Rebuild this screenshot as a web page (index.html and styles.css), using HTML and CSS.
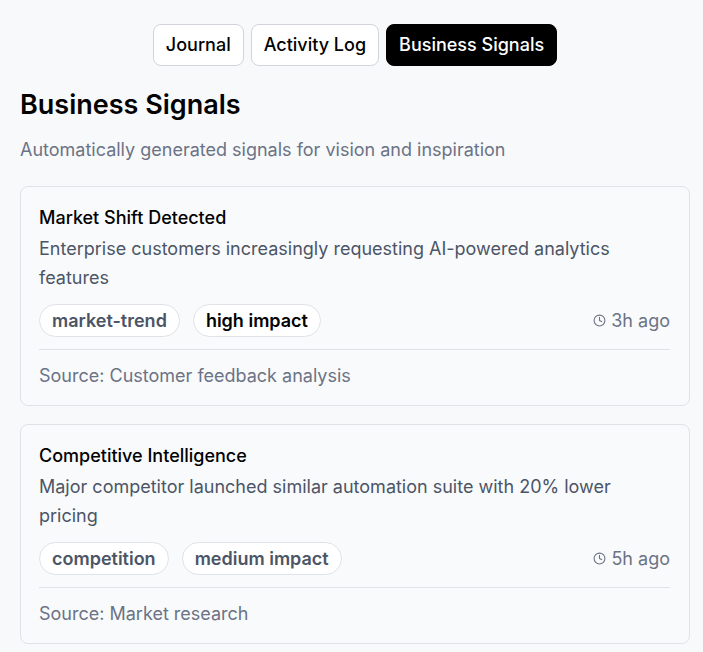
FILE: index.html
```
<!DOCTYPE html>
<html lang="en">
<head>
    <meta charset="UTF-8">
    <meta name="viewport" content="width=device-width, initial-scale=1.0">
    <title>Business Signals</title>
    <link rel="stylesheet" href="styles.css">
</head>
<body>

<nav class="tabs">
    <button class="tab">Journal</button>
    <button class="tab">Activity Log</button>
    <button class="tab active">Business Signals</button>
</nav>

<main>
    <h1>Business Signals</h1>
    <p class="subtitle">Automatically generated signals for vision and inspiration</p>

    <div class="signals">
        <article class="card">
            <h2>Market Shift Detected</h2>
            <p class="description">Enterprise customers increasingly requesting AI-powered analytics features</p>
            <div class="meta">
                <span class="badge">market-trend</span>
                <span class="badge high">high impact</span>
                <span class="time">
                    <svg class="clock" viewBox="0 0 24 24"><circle cx="12" cy="12" r="10"/><path d="M12 6v6l4 2"/></svg>
                    3h ago
                </span>
            </div>
            <p class="source">Source: Customer feedback analysis</p>
        </article>

        <article class="card">
            <h2>Competitive Intelligence</h2>
            <p class="description">Major competitor launched similar automation suite with 20% lower pricing</p>
            <div class="meta">
                <span class="badge">competition</span>
                <span class="badge">medium impact</span>
                <span class="time">
                    <svg class="clock" viewBox="0 0 24 24"><circle cx="12" cy="12" r="10"/><path d="M12 6v6l4 2"/></svg>
                    5h ago
                </span>
            </div>
            <p class="source">Source: Market research</p>
        </article>
    </div>
</main>

</body>
</html>
```
FILE: styles.css
```
* {
    box-sizing: border-box;
}
body {
    margin: 0;
    padding: 24px 13px 8px 20px;
    font-family: Inter, sans-serif;
    font-size: 18px;
    background: #f8f9fb;
    color: #020202;
}
h1, h2, p {
    margin: 0;
}
.tabs {
    display: flex;
    justify-content: center;
    gap: 7px;
}
.tab {
    height: 42px;
    padding: 0 12px 1px;
    border: 1px solid #d1d5db;
    border-radius: 8px;
    background: #fff;
    color: #020202;
    font-family: inherit;
    font-size: 18px;
    font-weight: 500;
    cursor: pointer;
}
.tab.active {
    background: #000;
    border-color: #000;
    color: #fff;
}
h1 {
    margin-top: 20px;
    font-size: 27px;
    font-weight: 600;
    line-height: 38px;
}
.subtitle {
    margin-top: 12px;
    color: #6b7385;
    line-height: 28px;
}
.signals {
    display: flex;
    flex-direction: column;
    gap: 18px;
    margin-top: 22px;
}
.card {
    padding: 18px 19px 16px 18px;
    border: 1px solid #dfe2e6;
    border-radius: 8px;
    background: #f9fafc;
}
h2 {
    font-size: 18px;
    font-weight: 500;
    line-height: 26px;
}
.description {
    margin-top: 3px;
    color: #4b5566;
    line-height: 29px;
}
.meta {
    display: flex;
    align-items: center;
    gap: 13px;
    margin-top: 12px;
}
.badge {
    padding: 0 12px;
    border: 1px solid #dfe2e6;
    border-radius: 17px;
    background: #fff;
    color: #4b5566;
    font-weight: 600;
    line-height: 31px;
}
.badge.high {
    color: #020202;
}
.time {
    display: flex;
    align-items: center;
    gap: 5px;
    margin-left: auto;
    color: #6b7385;
}
.clock {
    width: 13px;
    height: 13px;
    fill: none;
    stroke: currentColor;
    stroke-width: 2;
    stroke-linecap: round;
    stroke-linejoin: round;
}
.source {
    margin-top: 12px;
    padding-top: 13px;
    border-top: 1px solid #dfe2e6;
    color: #6b7385;
    line-height: 26px;
}
```
